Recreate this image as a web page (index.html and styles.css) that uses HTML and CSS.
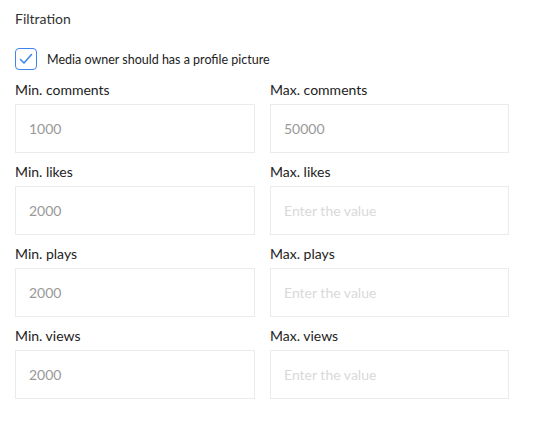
FILE: index.html
```html
<!DOCTYPE html>
<html lang="en">
<head>
  <meta charset="UTF-8" />
  <title>Filtration</title>
  <link rel="stylesheet" href="styles.css">
</head>
<body>
  <div class="panel">
    <h3 class="title">Filtration</h3>
    <label class="check">
      <span class="box">
        <svg width="14" height="12" viewBox="0 0 14 12"><path d="M1.5 6.5 L5 10 L12.5 1.5" fill="none" stroke="#3d86f0" stroke-width="1.6" stroke-linecap="round" stroke-linejoin="round"/></svg>
      </span>
      Media owner should has a profile picture
    </label>
    <div class="grid">
      <div class="field"><div class="label">Min. comments</div><input class="input" type="text" value="1000"></div>
      <div class="field"><div class="label">Max. comments</div><input class="input" type="text" value="50000"></div>
      <div class="field"><div class="label">Min. likes</div><input class="input" type="text" value="2000"></div>
      <div class="field"><div class="label">Max. likes</div><input class="input" type="text" placeholder="Enter the value"></div>
      <div class="field"><div class="label">Min. plays</div><input class="input" type="text" value="2000"></div>
      <div class="field"><div class="label">Max. plays</div><input class="input" type="text" placeholder="Enter the value"></div>
      <div class="field"><div class="label">Min. views</div><input class="input" type="text" value="2000"></div>
      <div class="field"><div class="label">Max. views</div><input class="input" type="text" placeholder="Enter the value"></div>
    </div>
  </div>
</body>
</html>
```

FILE: styles.css
```css
body {
  margin: 0;
  background: #fff;
  font-family: Lato, "Open Sans", sans-serif;
  color: #222;
}
.panel {
  padding: 10px 15px;
  width: 494px;
}
.title {
  margin: 0;
  font-size: 14px;
  font-weight: normal;
  line-height: 18px;
  color: #333;
}
.check {
  display: flex;
  align-items: center;
  gap: 10px;
  margin-top: 20px;
  font-size: 12.5px;
  color: #222;
}
.box {
  width: 20px;
  height: 20px;
  border: 1px solid #3d86f0;
  border-radius: 4px;
  display: flex;
  align-items: center;
  justify-content: center;
}
.grid {
  display: grid;
  grid-template-columns: 240px 239px;
  column-gap: 15px;
  margin-top: 1px;
}
.label {
  font-size: 14px;
  line-height: 18px;
  padding: 10px 0 5px;
  color: #222;
}
.input {
  box-sizing: border-box;
  width: 100%;
  height: 49px;
  border: 1px solid #ebebeb;
  padding: 0 13px;
  font-family: inherit;
  font-size: 14px;
  color: #999;
  outline: none;
}
.input::placeholder {
  color: #d9d9d9;
}
```
